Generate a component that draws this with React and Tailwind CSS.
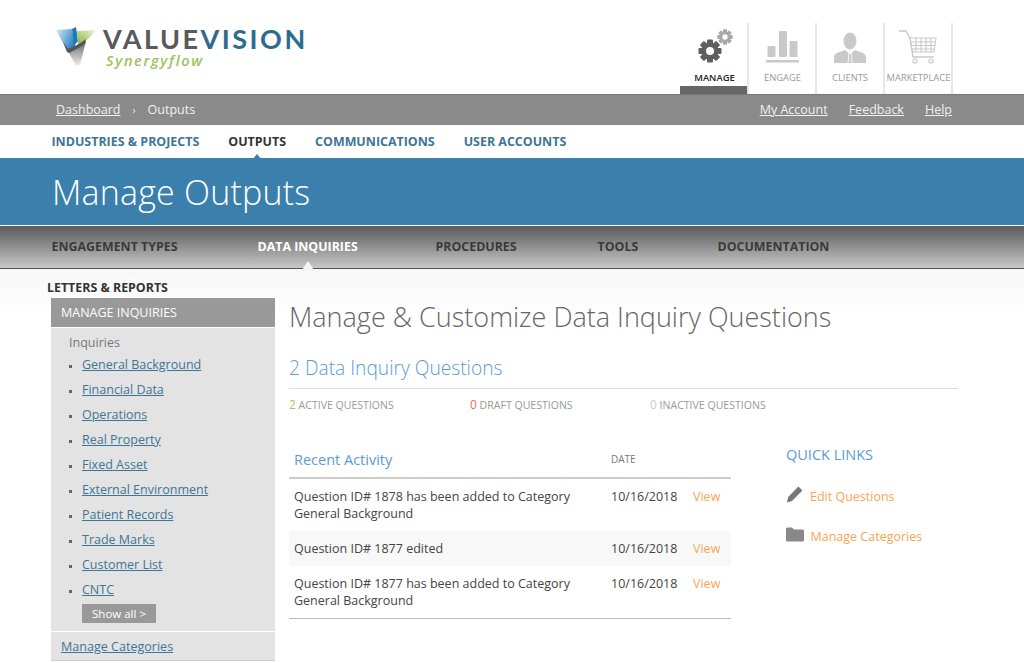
const inquiries = [
  "General Background",
  "Financial Data",
  "Operations",
  "Real Property",
  "Fixed Asset",
  "External Environment",
  "Patient Records",
  "Trade Marks",
  "Customer List",
  "CNTC",
];

const Gear = ({ className, size }) => {
  const teeth = [0, 45, 90, 135];
  return (
    <svg viewBox="0 0 24 24" width={size} height={size} className={className}>
      {teeth.map((a) => (
        <rect key={a} x="9" y="0.5" width="6" height="23" rx="1" fill="currentColor" transform={`rotate(${a} 12 12)`} />
      ))}
      <circle cx="12" cy="12" r="8.6" fill="currentColor" />
      <circle cx="12" cy="12" r="4" fill="#fff" />
    </svg>
  );
};

const Logo = () => (
  <div className="flex items-start">
    <svg viewBox="0 0 42 40" width="42" height="40" className="mt-[27px] ml-[55px]">
      <defs>
        <linearGradient id="lb" x1="0" y1="0" x2="1" y2="0.6">
          <stop offset="0" stopColor="#d5ecf9" />
          <stop offset="1" stopColor="#2a7fc0" />
        </linearGradient>
        <linearGradient id="lg" x1="1" y1="0" x2="0" y2="1">
          <stop offset="0" stopColor="#eef5d5" />
          <stop offset="1" stopColor="#8ab53f" />
        </linearGradient>
        <linearGradient id="lk" x1="0" y1="0" x2="0" y2="1">
          <stop offset="0" stopColor="#666" />
          <stop offset="1" stopColor="#f0f0f0" />
        </linearGradient>
      </defs>
      <path d="M1 3 L17 2 L20 20 L13 25 Z" fill="url(#lb)" />
      <path d="M17 2 L21 0 L23 14 L19 19 Z" fill="#2376b5" />
      <path d="M22 4 L41 3 L33 12 L23 17 Z" fill="url(#lg)" />
      <path d="M13 24 C20 22 26 18 31 14 L25 38 L21 39 Z" fill="url(#lk)" />
      <path d="M8 15 L13 22 C20 19 26 16 31 12 L30 17 C24 21 19 23 14 26 L12 25 Z" fill="#555" />
    </svg>
    <div className="ml-[6px] mt-[26px]">
      <div className="font-['Lato',sans-serif] font-bold text-[27px] leading-[26px] tracking-[2.5px]">
        <span className="text-[#58595b]">VALUE</span>
        <span className="text-[#2e6b8f]">VISION</span>
      </div>
      <div className="mt-[2px] font-['Open_Sans',sans-serif] italic font-semibold text-[14.5px] leading-[14px] tracking-[1.65px] text-[#9cc25b] ml-[3px]">
        Synergyflow
      </div>
    </div>
  </div>
);

const Tab = ({ label, active, labelClass = "ml-[1px]", children }) => (
  <div className="relative w-[68px] h-[71px] border-r-2 border-[#e6e6e6] flex flex-col items-center">
    <div className="h-[47px] flex items-end justify-center w-full">{children}</div>
    <span className={`mt-[1px] text-[9.4px] leading-[14px] whitespace-nowrap ${labelClass} ${active ? "text-[#222] font-semibold" : "text-[#999]"}`}>
      {label}
    </span>
    {active && <div className="absolute bottom-0 -left-[1px] right-0 h-[8px] bg-[#666]" />}
  </div>
);

const Header = () => (
  <header className="h-[94px] bg-white flex justify-between">
    <Logo />
    <div className="flex items-end mr-[71px] h-[94px]">
      <Tab label="MANAGE" active>
        <div className="relative w-[35px] h-[35px] mb-[7px] ml-[2px] text-[#5e5e5e]">
          <Gear size={24} className="absolute left-0 bottom-0" />
          <Gear size={16} className="absolute right-0 top-[1px] text-[#a8a8a8]" />
        </div>
      </Tab>
      <Tab label="ENGAGE">
        <svg viewBox="0 0 33 32" width="33" height="32" className="mb-[7px] text-[#c9c9c9]" fill="currentColor">
          <rect x="1.5" y="15" width="8" height="11" rx="1" />
          <rect x="13" y="0" width="8" height="26" rx="1" />
          <rect x="23.5" y="10" width="8" height="16" rx="1" />
          <rect x="0" y="29" width="33" height="2.5" />
        </svg>
      </Tab>
      <Tab label="CLIENTS" labelClass="">
        <svg viewBox="0 0 32 31" width="32" height="31" className="mb-[7px] text-[#c9c9c9]" fill="currentColor">
          <ellipse cx="16" cy="9" rx="6.5" ry="8.5" />
          <path d="M0 31 V25 C0 21 6 20 11 18 L14.5 21 L13.5 31 Z M32 31 V25 C32 21 26 20 21 18 L17.5 21 L18.5 31 Z M15 22 H17 L17.5 31 H14.5 Z" />
        </svg>
      </Tab>
      <Tab label="MARKETPLACE">
        <svg viewBox="0 0 38 34" width="38" height="34" className="mb-[6px] text-[#c9c9c9]" fill="none" stroke="currentColor">
          <path d="M0 1 H7 L11 8 L14 27 H35" strokeWidth="1.3" />
          <path d="M11 8 H37 L35 22 H13.5 Z M12 12 H36.5 M13 15.5 H36 M13.5 19 H35.5 M17 8 V22 M22 8 V22 M27 8 V22 M32 8 V22" strokeWidth="1.1" />
          <circle cx="16" cy="31" r="2" strokeWidth="1.2" />
          <circle cx="32" cy="31" r="2" strokeWidth="1.2" />
        </svg>
      </Tab>
    </div>
  </header>
);

const Breadcrumb = () => (
  <div className="h-[31px] bg-[#8a8a8a] flex items-center justify-between pl-[56px] pr-[72px] text-[12.5px] text-[#f1f1f1] shadow-[inset_0_1px_0_#777]">
    <div className="flex items-center mt-[1px]">
      <a className="underline">Dashboard</a>
      <span className="ml-[12px] mr-[12px] text-[10px]">›</span>
      <span>Outputs</span>
    </div>
    <div className="flex gap-[21px] mt-[1px]">
      <a className="underline">My Account</a>
      <a className="underline">Feedback</a>
      <a className="underline">Help</a>
    </div>
  </div>
);

const MainNav = () => (
  <nav className="h-[33px] bg-white flex items-center pl-[51.5px] pt-[1px] gap-[29px] text-[12.45px] font-bold text-[#3e7596]">
    <a>INDUSTRIES &amp; PROJECTS</a>
    <a className="relative text-[#333]">
      OUTPUTS
      <span className="absolute left-1/2 -translate-x-1/2 -bottom-[9px] w-0 h-0 border-x-[5px] border-x-transparent border-b-[6px] border-b-[#3b7fad]" />
    </a>
    <a>COMMUNICATIONS</a>
    <a>USER ACCOUNTS</a>
  </nav>
);

const Banner = () => (
  <div className="h-[67px] bg-[#3b7fad] flex items-center pl-[52px]">
    <h1 className="text-[34px] font-light text-white leading-none tracking-[0.2px]">Manage Outputs</h1>
  </div>
);

const SubNav = () => (
  <nav className="mt-[1px] h-[43px] bg-gradient-to-b from-[#5c5c5c] to-[#c9c9c9] border-b border-[#555] flex items-center pl-[51.5px] text-[12.4px] font-bold text-[#3a3a3a]">
    <a className="w-[206px]">ENGAGEMENT TYPES</a>
    <a className="relative w-[178px] text-white">
      DATA INQUIRIES
      <span className="absolute left-[44px] -bottom-[14px] w-0 h-0 border-x-[6px] border-x-transparent border-b-[9px] border-b-[#f5f5f5]" />
    </a>
    <a className="w-[162px]">PROCEDURES</a>
    <a className="w-[120px]">TOOLS</a>
    <a>DOCUMENTATION</a>
  </nav>
);

const Sidebar = () => (
  <aside className="w-[224px] shrink-0 ml-[51px]">
    <h3 className="-ml-[4px] h-[29px] pt-[10px] text-[12.4px] leading-[17px] font-bold text-[#333]">LETTERS &amp; REPORTS</h3>
    <div className="h-[29px] bg-[#999] flex items-center pl-[10px] pt-[1px] text-[12.5px] text-white">MANAGE INQUIRIES</div>
    <div className="mt-[1px] h-[303px] bg-[#e3e3e3] pl-[18px] pt-[6px] text-[12.5px]">
      <div className="text-[#777] leading-[18px]">Inquiries</div>
      <ul className="mt-[1px]">
        {inquiries.map((item) => (
          <li key={item} className="h-[25px] flex items-center">
            <span className="w-[3px] h-[3px] bg-[#666] mr-[10px] mt-[1px]" />
            <a className="text-[#3e7596] underline">{item}</a>
          </li>
        ))}
      </ul>
      <button className="ml-[13px] mt-[1px] block w-[74px] h-[19px] bg-[#999] text-[11.5px] leading-[19px] text-white text-center">
        Show all &gt;
      </button>
    </div>
    <div className="mt-[1px] h-[29px] bg-[#e3e3e3] flex items-center pl-[10px] pt-[2px] text-[12.55px] border-b border-[#ccc]">
      <a className="text-[#3e7596] underline">Manage Categories</a>
    </div>
  </aside>
);

const activity = [
  { text: ["Question ID# 1878 has been added to Category", "General Background"] },
  { text: ["Question ID# 1877 edited"], shaded: true },
  { text: ["Question ID# 1877 has been added to Category", "General Background"] },
];

const Main = () => (
  <main className="ml-[14px] w-[669px] pt-[29px]">
    <h2 className="text-[27px] font-light leading-[38px] text-[#666] whitespace-nowrap">
      Manage &amp; Customize Data Inquiry Questions
    </h2>
    <div className="mt-[19px] h-[34px] border-b border-[#ddd] text-[19.2px] font-light leading-[26px] text-[#5b9bd5]">
      2 Data Inquiry Questions
    </div>
    <div className="mt-[8px] flex text-[10.55px] leading-[16px] text-[#999]">
      <span className="w-[181px]"><span className="text-[12px] text-[#a5c95f]">2</span> ACTIVE QUESTIONS</span>
      <span className="w-[180px]"><span className="text-[12px] text-[#f0695a]">0</span> DRAFT QUESTIONS</span>
      <span><span className="text-[12px] text-[#ccc]">0</span> INACTIVE QUESTIONS</span>
    </div>
    <div className="mt-[29px] flex">
      <section className="w-[442px]">
        <div className="h-[37px] flex items-center border-b-2 border-[#ccc] text-[14.5px] text-[#5b9bd5]">
          <span className="pl-[5px] w-[322px] mt-[1px]">Recent Activity</span>
          <span className="text-[10px] font-medium text-[#777]">DATE</span>
        </div>
        <div className="border-b border-[#bbb] text-[12.5px] leading-[17px] text-[#444]">
          {activity.map((row, i) => (
            <div key={i} className={`flex py-[9px] ${row.shaded ? "bg-[#f8f8f8]" : ""}`}>
              <div className="w-[322px] pl-[5px] whitespace-nowrap">
                {row.text.map((line) => (
                  <div key={line}>{line}</div>
                ))}
              </div>
              <span className="w-[82px]">10/16/2018</span>
              <a className="text-[#f9a555]">View</a>
            </div>
          ))}
        </div>
      </section>
      <section className="ml-[55px] pt-[3px]">
        <h4 className="text-[14.5px] leading-[20px] text-[#5b9bd5]">QUICK LINKS</h4>
        <div className="mt-[23px] flex items-center text-[12.5px] text-[#f9a555]">
          <svg viewBox="0 0 17 17" width="17" height="17" className="-mt-[5px]" fill="#777">
            <path d="M12.4 0.6 L16.4 4.4 L6 15 L1 16.6 L2.2 11 Z" />
          </svg>
          <a className="ml-[7px]">Edit Questions</a>
        </div>
        <div className="mt-[21px] flex items-center text-[12.5px] text-[#f9a555]">
          <svg viewBox="0 0 18 15" width="18" height="15" className="-mt-[5px]" fill="#888">
            <path d="M0 2 Q0 0.5 1.5 0.5 H6 L8 2.5 H16.5 Q18 2.5 18 4 V13 Q18 14.5 16.5 14.5 H1.5 Q0 14.5 0 13 Z" />
          </svg>
          <a className="ml-[6.5px]">Manage Categories</a>
        </div>
      </section>
    </div>
  </main>
);

export default function App() {
  return (
    <div className="h-[663px] overflow-hidden bg-white font-['Open_Sans',sans-serif]">
      <Header />
      <Breadcrumb />
      <MainNav />
      <Banner />
      <SubNav />
      <div className="h-[394px] flex bg-gradient-to-b from-[#f7f7f7] to-white to-[12%]">
        <Sidebar />
        <Main />
      </div>
    </div>
  );
}
